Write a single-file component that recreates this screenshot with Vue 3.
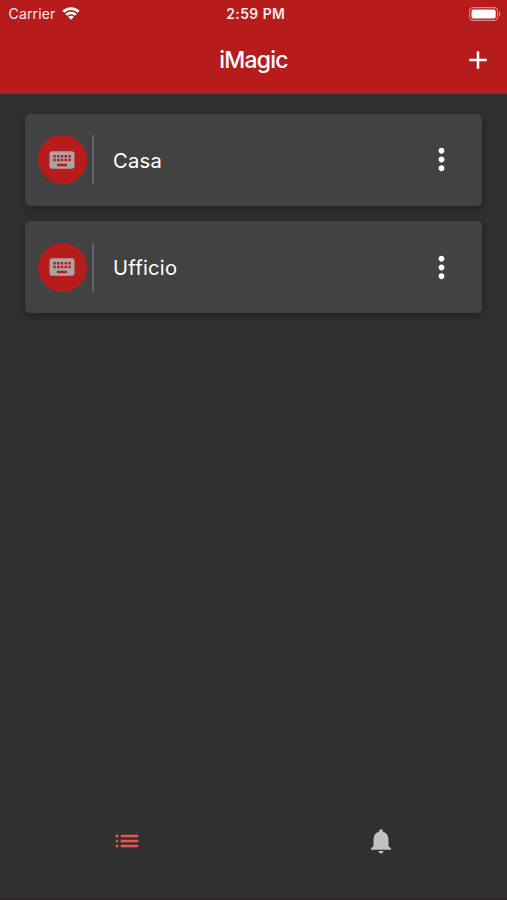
<script setup>
const keyboards = ['Casa', 'Ufficio']
</script>

<template>
  <div class="screen">
    <header class="header">
      <div class="status">
        <div class="carrier">
          <span class="carrier-name">Carrier</span>
          <svg class="wifi" viewBox="0 0 18 13">
            <path d="M9 .3C5.6.3 2.6 1.6.4 3.7L2.3 5.7A9.7 9.7 0 0 1 15.7 5.7L17.6 3.7C15.4 1.6 12.4.3 9 .3Z" />
            <path d="M9 4.7C6.8 4.7 4.8 5.5 3.3 6.9L5.1 8.7A5.7 5.7 0 0 1 12.9 8.7L14.7 6.9C13.2 5.5 11.2 4.7 9 4.7Z" />
            <path d="M9 8.8C7.9 8.8 6.9 9.2 6.1 9.8L9 12.7L11.9 9.8C11.1 9.2 10.1 8.8 9 8.8Z" />
          </svg>
        </div>
        <span class="clock">2:59 PM</span>
        <svg class="battery" viewBox="0 0 32 14">
          <rect class="shell" x=".6" y=".6" width="28" height="12.8" rx="3.6" />
          <rect x="2.5" y="2.5" width="24.2" height="9" rx="2" />
          <path class="tip" d="M30 4.7C31.9 5.3 31.9 8.7 30 9.3Z" />
        </svg>
      </div>
      <div class="toolbar">
        <h1 class="title">iMagic</h1>
        <svg class="icon add" viewBox="0 0 24 24">
          <path d="M19 13h-6v6h-2v-6H5v-2h6V5h2v6h6v2z" />
        </svg>
      </div>
    </header>

    <main class="list">
      <article v-for="name in keyboards" :key="name" class="card">
        <div class="avatar">
          <svg class="icon" viewBox="0 0 24 24">
            <path d="M20 5H4c-1.1 0-1.99.9-1.99 2L2 17c0 1.1.9 2 2 2h16c1.1 0 2-.9 2-2V7c0-1.1-.9-2-2-2zm-9 3h2v2h-2V8zm0 3h2v2h-2v-2zM8 8h2v2H8V8zm0 3h2v2H8v-2zm-1 2H5v-2h2v2zm0-3H5V8h2v2zm9 7H8v-2h8v2zm0-4h-2v-2h2v2zm0-3h-2V8h2v2zm3 3h-2v-2h2v2zm0-3h-2V8h2v2z" />
          </svg>
        </div>
        <div class="divider"></div>
        <span class="name">{{ name }}</span>
        <svg class="more" viewBox="0 0 24 24">
          <path d="M12 8c1.1 0 2-.9 2-2s-.9-2-2-2-2 .9-2 2 .9 2 2 2zm0 2c-1.1 0-2 .9-2 2s.9 2 2 2 2-.9 2-2-.9-2-2-2zm0 6c-1.1 0-2 .9-2 2s.9 2 2 2 2-.9 2-2-.9-2-2-2z" />
        </svg>
      </article>
    </main>

    <nav class="tabs">
      <div class="tab active">
        <svg class="icon" viewBox="0 0 24 24">
          <path d="M3 13h2v-2H3v2zm0 4h2v-2H3v2zm0-8h2V7H3v2zm4 4h14v-2H7v2zm0 4h14v-2H7v2zM7 7v2h14V7H7z" />
        </svg>
      </div>
      <div class="tab">
        <svg class="icon" viewBox="0 0 24 24">
          <path d="M12 22c1.1 0 2-.9 2-2h-4c0 1.1.89 2 2 2zm6-6v-5c0-3.07-1.64-5.64-4.5-6.32V4c0-.83-.67-1.5-1.5-1.5s-1.5.67-1.5 1.5v.68C7.63 5.36 6 7.92 6 11v5l-2 2v1h16v-1l-2-2z" />
        </svg>
      </div>
    </nav>
  </div>
</template>

<style>
body {
  margin: 0;
  background: #303030;
}
</style>

<style scoped>
.screen {
  box-sizing: border-box;
  display: flex;
  flex-direction: column;
  height: 900px;
  background: #303030;
  border-bottom: 2px solid #30262c;
  color: #fff;
  font-family: Inter, "Liberation Sans", sans-serif;
  overflow: hidden;
}
svg {
  display: block;
  fill: currentColor;
}
.icon {
  width: 30px;
  height: 30px;
}
.header {
  height: 93.5px;
  flex: none;
  background: #b71c1c;
}
.status {
  display: grid;
  grid-template-columns: 1fr auto 1fr;
  align-items: center;
  height: 27px;
  padding: 0 6px 0 8.5px;
  color: #ffe9e7;
}
.carrier {
  display: flex;
  align-items: center;
  gap: 6.5px;
}
.carrier-name {
  font-size: 14px;
  letter-spacing: 0.15px;
}
.wifi {
  width: 18px;
  height: 13px;
  color: #fff;
}
.clock {
  padding-left: 2px;
  font-size: 13.8px;
  font-weight: 600;
  letter-spacing: 0.5px;
}
.battery {
  justify-self: end;
  width: 32px;
  height: 14px;
  color: #fff;
}
.shell {
  fill: none;
  stroke: #df8985;
  stroke-width: 1.1;
}
.tip {
  fill: #df8985;
}
.toolbar {
  display: grid;
  grid-template-columns: 1fr auto 1fr;
  align-items: center;
  height: 66px;
  padding: 0 14.5px;
}
.title {
  grid-column: 2;
  margin: 0;
  font-size: 23px;
  font-weight: 500;
  letter-spacing: -0.8px;
}
.add {
  justify-self: end;
}
.list {
  flex: 1;
  display: flex;
  flex-direction: column;
  gap: 14.5px;
  padding: 20px 24.8px 0 25.2px;
}
.card {
  box-sizing: border-box;
  display: flex;
  align-items: center;
  height: 92.7px;
  padding: 0 23.5px 0 12.5px;
  border-radius: 5px;
  background: #424242;
  box-shadow: 0 4px 9px rgba(0, 0, 0, 0.2), 0 1px 12px rgba(0, 0, 0, 0.12);
}
.avatar {
  display: grid;
  place-items: center;
  width: 49px;
  height: 49px;
  border-radius: 50%;
  background: #b71c1c;
  color: #a9a5a4;
}
.divider {
  width: 2px;
  height: 49px;
  margin: 0 19px 0 5.3px;
  background: #626262;
}
.name {
  flex: 1;
  padding-top: 0.4px;
  font-size: 20.2px;
  letter-spacing: 0.25px;
}
.more {
  width: 35px;
  height: 35px;
}
.tabs {
  display: flex;
  flex: none;
  height: 114px;
}
.tab {
  flex: 1;
  display: flex;
  align-items: center;
  justify-content: center;
  padding-left: 1px;
  color: #c1c1c1;
}
.active {
  color: #ef5350;
}
</style>
